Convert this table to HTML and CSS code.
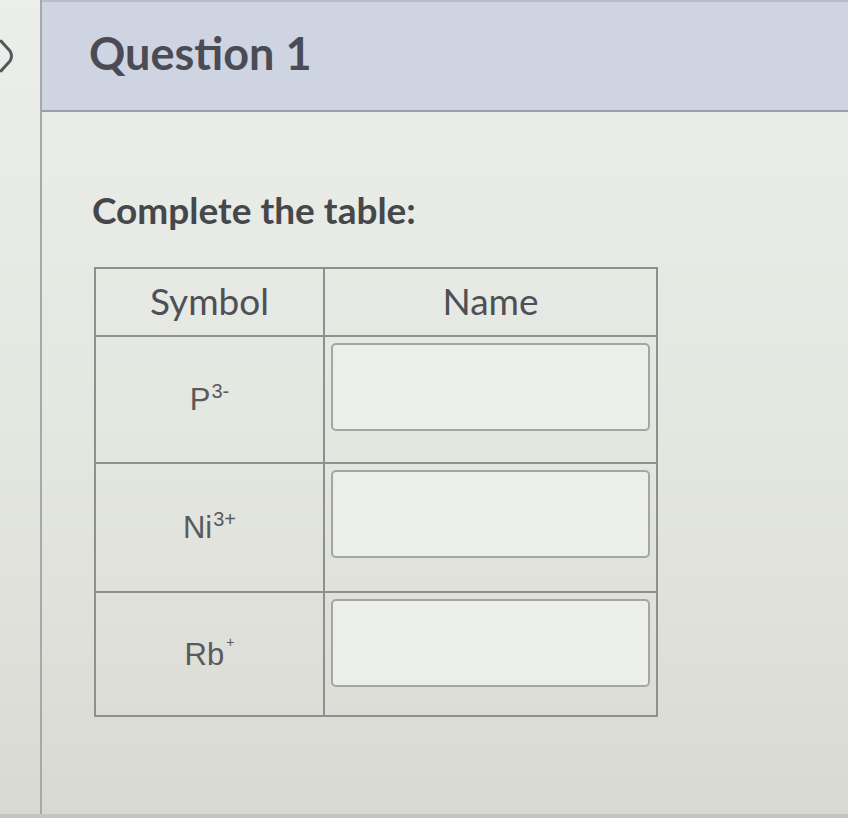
FILE: index.html
```html
<!DOCTYPE html>
<html>
<head>
<meta charset="utf-8">
<link rel="stylesheet" href="styles.css">
</head>
<body>
<div class="page">
  <div class="gutter">
    <svg class="chev" width="18" height="36" viewBox="0 0 18 36"><path d="M2 3 L11 13 Q14 18 11 23 L2 33" fill="none" stroke="#55575e" stroke-width="3" stroke-linejoin="round" stroke-linecap="round"/></svg>
  </div>
  <div class="main">
    <div class="header"><h1 class="title">Question 1</h1></div>
    <div class="content">
      <p class="prompt">Complete the table:</p>
      <div class="qtable">
        <div class="cell head">Symbol</div>
        <div class="cell head">Name</div>
        <div class="cell sym"><span>P<sup>3-</sup></span></div>
        <div class="cell inp"><div class="box"></div></div>
        <div class="cell sym"><span>Ni<sup>3+</sup></span></div>
        <div class="cell inp"><div class="box"></div></div>
        <div class="cell sym"><span>Rb<sup class="plus">+</sup></span></div>
        <div class="cell inp"><div class="box"></div></div>
      </div>
    </div>
  </div>
</div>
</body>
</html>
```

FILE: styles.css
```css
html, body {
  margin: 0;
  padding: 0;
}
body {
  width: 848px;
  height: 818px;
  overflow: hidden;
  background: #e3e4df;
  font-family: Lato, "Liberation Sans", sans-serif;
}
.page {
  display: flex;
  height: 814px;
  border-bottom: 4px solid #c3c5c0;
  background: linear-gradient(180deg, #eceeea 0%, #e4e6e0 55%, #d8dad2 100%);
}
.gutter {
  width: 40px;
  flex: none;
  position: relative;
}
.chev {
  position: absolute;
  left: -1px;
  top: 38px;
}
.main {
  flex: 1;
  border-left: 2px solid #a6a8ad;
  display: flex;
  flex-direction: column;
}
.header {
  background: #cfd4e2;
  border-top: 2px solid #b9bcc6;
  border-bottom: 2px solid #9a9ea8;
  display: flex;
  align-items: center;
  padding-left: 47px;
  box-sizing: border-box;
  height: 112px;
}
.title {
  margin: 0;
  font-family: Lato, sans-serif;
  font-weight: 700;
  font-size: 45px;
  color: #4a4b54;
  padding-bottom: 6px;
}
.content {
  padding-left: 52px;
}
.prompt {
  margin: 76px 0 0 -2px;
  font-family: Lato, sans-serif;
  font-weight: 700;
  font-size: 37px;
  color: #45474b;
  line-height: 44px;
}
.qtable {
  margin-top: 35px;
  width: 564px;
  display: grid;
  grid-template-columns: 229px 1fr;
  grid-template-rows: 68px 127px 129px 122px;
  border: 2px solid #8d8f91;
  box-sizing: border-box;
}
.cell {
  border-right: 2px solid #8d8f91;
  border-bottom: 2px solid #8d8f91;
  display: flex;
  align-items: center;
  justify-content: center;
}
.cell:nth-child(2n) { border-right: none; }
.cell:nth-last-child(-n+2) { border-bottom: none; }
.head {
  font-family: Lato, sans-serif;
  font-size: 37px;
  color: #4e5055;
  padding-bottom: 4px;
}
.sym {
  font-family: "Liberation Sans", Arial, sans-serif;
  font-size: 31px;
  color: #585a5e;
  padding-bottom: 2px;
}
.sym sup {
  font-size: 20px;
  vertical-align: 12px;
  margin-left: 1px;
}
.sym sup.plus {
  font-size: 14px;
  vertical-align: 18px;
  margin-left: 2px;
}
.inp {
  align-items: flex-start;
  padding: 6px 6px 0 6px;
}
.box {
  flex: 1;
  height: 88px;
  border: 2px solid #a3a5a6;
  border-radius: 5px;
  background: #eceeea;
  box-sizing: border-box;
}
```
